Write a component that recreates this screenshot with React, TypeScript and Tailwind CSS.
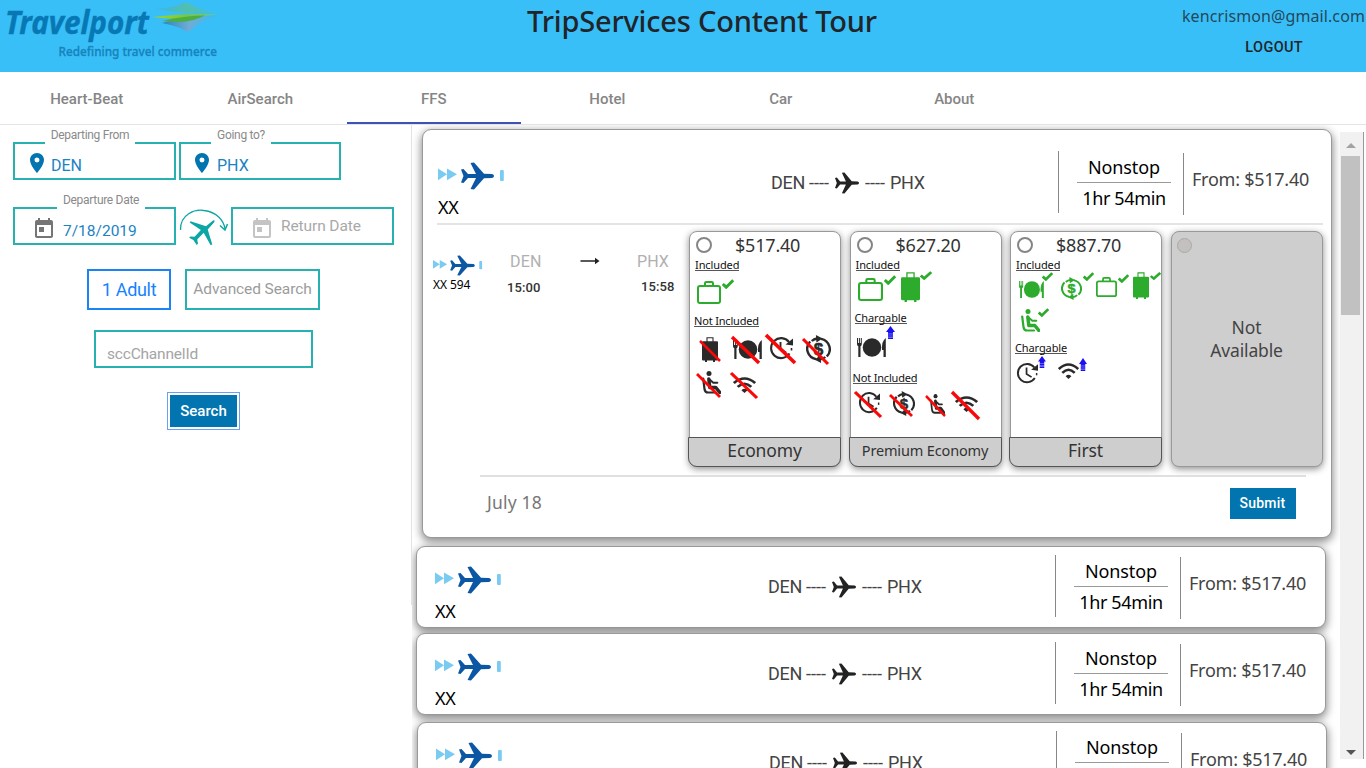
import React from "react";

type Kind = "case" | "luggage" | "meal" | "clock" | "refund" | "seat" | "wifi";
type Badge = "check" | "up" | "slash";

const glyphBox: Record<Kind, string> = {
  case: "0 0 24 23",
  luggage: "0 0 16 26",
  meal: "0 0 29 19",
  clock: "0 0 24 24",
  refund: "0 0 24 28",
  seat: "0 0 19 23",
  wifi: "0 0 22 17",
};

function Glyph({ kind }: { kind: Kind }) {
  switch (kind) {
    case "case":
      return (
        <g fill="none" stroke="currentColor" strokeWidth="2">
          <rect x="1" y="5" width="22" height="17" rx="2" />
          <path d="M8 5V2.2Q8 1 9.2 1h5.6Q16 1 16 2.2V5" />
        </g>
      );
    case "luggage":
      return (
        <g>
          <path d="M5 6V.8h6V6" fill="none" stroke="currentColor" strokeWidth="1.1" />
          <path d="M1 4.500h14q1 0 1 1v18q0 1-1 1H1q-1 0-1-1v-18q0-1 1-1z" fill="currentColor" />
          <path d="M3 24h2v2H3zM11 24h2v2h-2z" fill="currentColor" />
        </g>
      );
    case "meal":
      return (
        <g fill="currentColor">
          <circle cx="15" cy="9.5" r="9.300" />
          <path d="M0 0h1v5h.9V0h1v5h.9V0h1v6q0 1.7-1.3 2.2V19H1.300V8.200Q0 7.700 0 6z" />
          <path d="M28.800 0v19h-2.300v-7h-1.500q-.5-9 3.800-12z" />
        </g>
      );
    case "clock":
      return (
        <g fill="none" stroke="currentColor" strokeWidth="2.100">
          <path d="M20 6A10 10 0 1 0 20.500 17.500" />
          <path d="M11.500 6v7l5.500 3.500" strokeWidth="1.900" />
          <path d="M24 2.500v7l-7.500-1z" fill="currentColor" stroke="none" />
          <path d="M22.500 12v2.500" strokeWidth="1.600" />
        </g>
      );
    case "refund":
      return (
        <g>
          <g fill="none" stroke="currentColor" strokeWidth="2.300">
            <path d="M9.500 24.200A10.700 10.700 0 0 1 4 6.500" />
            <path d="M14.500 3.800A10.700 10.700 0 0 1 20 21.500" />
            <path d="M5.500 6Q8 3.800 11 3.500M18.500 22q-2.500 2.300-5.500 2.500" />
          </g>
          <path d="M9.500 0l6.500 3.500-6 4zM14.500 28L8 24.500l6-4z" fill="currentColor" />
          <text x="12" y="19.800" textAnchor="middle" fontFamily="Liberation Sans, sans-serif" fontWeight="700" fontSize="16.500" fill="currentColor" stroke="currentColor" strokeWidth=".5">$</text>
        </g>
      );
    case "seat":
      return (
        <g fill="none" stroke="currentColor" strokeLinecap="round">
          <circle cx="7" cy="2.500" r="2.500" fill="currentColor" stroke="none" />
          <path d="M1.200 7.500l1.300 10.500Q3 21.500 6 21.500h7" strokeWidth="2.200" />
          <path d="M6.800 8l1 8.500h6l4 5" strokeWidth="3.400" strokeLinejoin="round" />
          <path d="M7.500 8.500l3.800 3.300h4" strokeWidth="2" />
        </g>
      );
    case "wifi":
      return (
        <g fill="none" stroke="currentColor" strokeWidth="2.700">
          <path d="M.8 6.500Q11-3.300 21.200 6.500" />
          <path d="M4.500 10.500Q11 4 17.500 10.500" />
          <path d="M8 14Q11 11 14 14L11 17z" fill="currentColor" stroke="none" />
        </g>
      );
  }
}

function BadgeMark({ badge }: { badge: Badge }) {
  if (badge === "check")
    return (
      <svg viewBox="0 0 12 10" preserveAspectRatio="none" className="block h-full w-full text-[#2cab2c]">
        <path d="M.8 5l3.400 3.200L11.200 1.200" fill="none" stroke="currentColor" strokeWidth="3" />
      </svg>
    );
  if (badge === "up")
    return (
      <svg viewBox="0 0 9 13" preserveAspectRatio="none" className="block h-full w-full text-[#1a10f0]">
        <path d="M4.500 0L9 6H7v1.800H2V6H0zM2 8.300h5v1.400H2zM2 10.200h5v1.200H2zM2 12h5v1H2z" fill="currentColor" />
        <path d="M2 7.500h5V13H2z" fill="currentColor" opacity=".35" />
      </svg>
    );
  return (
    <svg viewBox="0 0 24 24" preserveAspectRatio="none" className="block h-full w-full overflow-visible text-[#fa0808]">
      <path d="M0 0L24 24" stroke="currentColor" strokeWidth="3" />
    </svg>
  );
}

interface FeatureData {
  kind: Kind;
  badge: Badge;
  box: string;
  mark: string;
}

function Feature({ kind, badge, box, mark }: FeatureData) {
  return (
    <div className={`relative shrink-0 ${badge === "check" ? "text-[#2cab2c]" : "text-[#2a2a2a]"} ${box}`}>
      <svg viewBox={glyphBox[kind]} preserveAspectRatio="none" className="block h-full w-full">
        <Glyph kind={kind} />
      </svg>
      <div className={`absolute ${mark}`}>
        <BadgeMark badge={badge} />
      </div>
    </div>
  );
}

interface Section {
  title: string;
  head: string;
  rows: { cls: string; items: FeatureData[] }[];
}

interface Fare {
  price: string;
  cabin: string;
  cabinCls: string;
  sections: Section[];
}

const fares: Fare[] = [
  {
    price: "$517.40",
    cabin: "Economy",
    cabinCls: "text-[17.500px] tracking-[-0.15px]",
    sections: [
      {
        title: "Included",
        head: "ml-[5px] tracking-[-0.1px]",
        rows: [
          {
            cls: "h-[43px]",
            items: [{ kind: "case", badge: "check", box: "ml-[7px] mt-[10px] w-[24px] h-[23px]", mark: "left-[25px] -top-[2px] w-[12px] h-[10px]" }],
          },
        ],
      },
      {
        title: "Not Included",
        head: "ml-[4px] tracking-[-0.18px]",
        rows: [
          {
            cls: "h-[43px]",
            items: [
              { kind: "luggage", badge: "slash", box: "ml-[12px] mt-[10px] w-[16px] h-[25px]", mark: "-left-[2px] top-[4px] w-[20px] h-[20px]" },
              { kind: "meal", badge: "slash", box: "ml-[15px] mt-[13px] w-[29px] h-[19px]", mark: "-left-[1px] -top-[3px] w-[27px] h-[26px]" },
              { kind: "clock", badge: "slash", box: "ml-[7px] mt-[9px] w-[24px] h-[24px]", mark: "-left-[3px] -top-[1px] w-[29px] h-[28px]" },
              { kind: "refund", badge: "slash", box: "ml-[13px] mt-[8px] w-[25px] h-[28px]", mark: "-left-[3px] top-[4px] w-[25px] h-[25px]" },
            ],
          },
          {
            cls: "h-[30px]",
            items: [
              { kind: "seat", badge: "slash", box: "ml-[12px] mt-px w-[19px] h-[23px]", mark: "-left-[5px] top-[3px] w-[23px] h-[23px]" },
              { kind: "wifi", badge: "slash", box: "ml-[12px] mt-[7px] w-[23px] h-[16px]", mark: "-left-[2px] -top-[4px] w-[26px] h-[25px]" },
            ],
          },
        ],
      },
    ],
  },
  {
    price: "$627.20",
    cabin: "Premium Economy",
    cabinCls: "text-[14.500px] tracking-[-0.15px]",
    sections: [
      {
        title: "Included",
        head: "ml-[5px] tracking-[-0.1px]",
        rows: [
          {
            cls: "h-[40px]",
            items: [
              { kind: "case", badge: "check", box: "ml-[7px] mt-[7px] w-[25px] h-[23px]", mark: "left-[26px] -top-[3px] w-[12px] h-[10px]" },
              { kind: "luggage", badge: "check", box: "ml-[18px] mt-[1px] w-[19px] h-[30px]", mark: "left-[19px] -top-[1px] w-[12px] h-[9px]" },
            ],
          },
        ],
      },
      {
        title: "Chargable",
        head: "ml-[4px] tracking-[-0.1px]",
        rows: [
          {
            cls: "h-[47px]",
            items: [{ kind: "meal", badge: "up", box: "ml-[6px] mt-[14px] w-[29px] h-[19px]", mark: "left-[29px] -top-[12px] w-[9px] h-[13px]" }],
          },
        ],
      },
      {
        title: "Not Included",
        head: "ml-[2px] tracking-[-0.18px]",
        rows: [
          {
            cls: "h-[30px]",
            items: [
              { kind: "clock", badge: "slash", box: "ml-[7px] mt-[7px] w-[22px] h-[23px]", mark: "-left-[3px] top-[1px] w-[26px] h-[25px]" },
              { kind: "refund", badge: "slash", box: "ml-[13px] mt-[7px] w-[22px] h-[25px]", mark: "-left-[3px] top-[4px] w-[22px] h-[21px]" },
              { kind: "seat", badge: "slash", box: "ml-[15px] mt-[10px] w-[15px] h-[20px]", mark: "-left-[4px] top-[2px] w-[19px] h-[20px]" },
              { kind: "wifi", badge: "slash", box: "ml-[10px] mt-[12px] w-[23px] h-[16px]", mark: "-left-[3px] -top-[4px] w-[27px] h-[27px]" },
            ],
          },
        ],
      },
    ],
  },
  {
    price: "$887.70",
    cabin: "First",
    cabinCls: "text-[17.500px] tracking-[-0.15px]",
    sections: [
      {
        title: "Included",
        head: "ml-[5px] tracking-[-0.1px]",
        rows: [
          {
            cls: "h-[38px]",
            items: [
              { kind: "meal", badge: "check", box: "ml-[8px] mt-[10px] w-[25px] h-[17px]", mark: "left-[23px] -top-[9px] w-[11px] h-[9px]" },
              { kind: "refund", badge: "check", box: "ml-[17px] mt-[6px] w-[21px] h-[23px]", mark: "left-[22px] -top-[5px] w-[11px] h-[9px]" },
              { kind: "case", badge: "check", box: "ml-[14px] mt-[6px] w-[21px] h-[20px]", mark: "left-[22px] -top-[3px] w-[11px] h-[9px]" },
              { kind: "luggage", badge: "check", box: "ml-[16px] mt-px w-[16px] h-[27px]", mark: "left-[17px] top-0 w-[11px] h-[8px]" },
            ],
          },
          {
            cls: "h-[32px]",
            items: [{ kind: "seat", badge: "check", box: "ml-[10px] w-[19px] h-[23px]", mark: "left-[17px] -top-[1px] w-[11px] h-[9px]" }],
          },
        ],
      },
      {
        title: "Chargable",
        head: "ml-[4px] tracking-[-0.1px]",
        rows: [
          {
            cls: "h-[30px]",
            items: [
              { kind: "clock", badge: "up", box: "ml-[5px] mt-[8px] w-[22px] h-[22px]", mark: "left-[22px] -top-[6px] w-[8px] h-[12px]" },
              { kind: "wifi", badge: "up", box: "ml-[20px] mt-[9px] w-[21px] h-[16px]", mark: "left-[21px] -top-[5px] w-[8px] h-[13px]" },
            ],
          },
        ],
      },
    ],
  },
];

const humanist = "font-['Noto_Sans','Open_Sans',sans-serif]";

function FareCard({ fare }: { fare: Fare }) {
  return (
    <div className="flex h-[236px] w-[152px] shrink-0 flex-col rounded-[8px] border border-[#999] bg-white shadow-[0_2px_7px_rgba(0,0,0,0.45)]">
      <div className="flex h-[26px] shrink-0 items-center pl-[6px]">
        <span className="h-[16px] w-[16px] rounded-full border-2 border-[#858585]" />
        <span className="ml-[23px] text-[18px] leading-[26px] tracking-[-0.2px] text-[#333]">{fare.price}</span>
      </div>
      {fare.sections.map((s) => (
        <React.Fragment key={s.title}>
          <div className={`h-[13px] shrink-0 self-start border-b border-[#555] text-[11px] leading-[13px] text-[#111] ${s.head}`}>{s.title}</div>
          {s.rows.map((r, i) => (
            <div key={i} className={`flex shrink-0 items-start ${r.cls}`}>
              {r.items.map((f) => (
                <Feature key={f.kind} {...f} />
              ))}
            </div>
          ))}
        </React.Fragment>
      ))}
      <div className={`-ml-[2px] -mr-px -mb-px mt-auto h-[30px] shrink-0 rounded-b-[9px] border border-[#555] bg-[#cecece] text-center leading-[25px] text-[#333] ${fare.cabinCls}`}>{fare.cabin}</div>
    </div>
  );
}

const planePath =
  "M0 7.500L2.500 7 7 12h8L9.500 1 13 .5l10 11.300 8 .2q2 .5 2 2t-2 2l-8 .2-10 11.300L9.500 27 15 16H7l-4.500 5L0 20.500 2.500 14z";

function AirlineLogo({ className }: { className: string }) {
  return (
    <svg viewBox="0 0 67 28" className={`block shrink-0 ${className}`}>
      <path d="M0 6.500l9 5.800-9 6zM9 6.500l10 5.800-10 6z" fill="#7acbf1" />
      <rect x="62" y="8" width="3.800" height="11" rx="1" fill="#7acbf1" />
      <path transform="translate(23 0)" d={planePath} fill="#0c57a3" />
    </svg>
  );
}

function Summary({ className }: { className: string }) {
  return (
    <div className={`flex h-[79px] shrink-0 items-start ${className}`}>
      <div className="w-[333px] shrink-0 pt-[19px]">
        <AirlineLogo className="h-[28px] w-[67px]" />
        <div className="mt-[5px] text-[18px] leading-[24px] tracking-[-0.2px] text-black">XX</div>
      </div>
      <div className="flex w-[287px] shrink-0 items-center pt-[27px] font-['Roboto',sans-serif] text-[18px] leading-[26px] tracking-[-0.3px] text-[#444]">
        <span className="w-[38px]">DEN</span>
        <span className="w-[26px] tracking-[0px]">----</span>
        <svg viewBox="0 0 33 28" preserveAspectRatio="none" className="h-[22px] w-[24px]">
          <path d={planePath} fill="#222" />
        </svg>
        <span className="ml-[6px] w-[25px] tracking-[0px]">----</span>
        <span>PHX</span>
      </div>
      <div className="mt-[8px] h-[62px] w-px bg-[#888]" />
      <div className="flex w-[124px] shrink-0 flex-col items-center pl-[6px] pt-[11px] text-[18px] tracking-[-0.1px] text-black">
        <span className="leading-[26px]">Nonstop</span>
        <span className="mt-[2px] h-px w-[94px] bg-[#999]" />
        <span className="mt-[2px] leading-[27px] tracking-[-0.35px]">1hr 54min</span>
      </div>
      <div className="mt-[10px] h-[62px] w-px bg-[#888]" />
      <span className="ml-[8px] mt-[23px] whitespace-nowrap text-[18px] leading-[26px] tracking-[-0.25px] text-[#444]">From: $517.40</span>
    </div>
  );
}

const cardBase = "shrink-0 rounded-[9px] border border-[#999] bg-white shadow-[0_3px_8px_1px_rgba(0,0,0,0.45)]";

function OpenItinerary() {
  return (
    <div className={`ml-[10px] flex h-[409px] w-[910px] flex-col pt-[13px] ${cardBase}`}>
      <Summary className="pl-[15px]" />
      <div className="ml-[14px] mr-[8px] mt-px h-[2px] shrink-0 bg-[#e4e4e4]" />
      <div className="flex shrink-0 pl-[10px] pt-[6px]">
        <div className="w-[74px] shrink-0 pt-[24px]">
          <AirlineLogo className="h-[21px] w-[50px]" />
          <div className="mt-[2px] text-[12px] leading-[14px] tracking-[-0.1px] text-black">XX 594</div>
        </div>
        <div className="flex h-[80px] w-[182px] shrink-0 items-start pt-[19px] font-['Roboto',sans-serif]">
          <div className="w-[73px]">
            <div className="ml-[3px] text-[16px] leading-[23px] tracking-[0.2px] text-[#b0b0b0]">DEN</div>
            <div className="mt-[5px] text-[13px] font-medium leading-[20px] tracking-[0.1px] text-[#333]">15:00</div>
          </div>
          <svg viewBox="0 0 19 8" className="mt-[7px] h-[8px] w-[20px]">
            <path d="M0 4h16" stroke="#222" strokeWidth="1.500" />
            <path d="M14.500.8L19 4l-4.500 3.200z" fill="#222" />
          </svg>
          <div className="ml-[37px] w-[40px]">
            <div className="text-[16px] leading-[23px] tracking-[0.1px] text-[#b0b0b0]">PHX</div>
            <div className="ml-[4px] mt-[4px] text-[13px] font-medium leading-[20px] tracking-[0.1px] text-[#333]">15:58</div>
          </div>
        </div>
        <div className="flex shrink-0 gap-[8.500px]">
          {fares.map((f) => (
            <FareCard key={f.cabin} fare={f} />
          ))}
          <div className="flex h-[236px] w-[152px] shrink-0 flex-col rounded-[8px] border border-[#999] bg-[#cecece] shadow-[0_2px_7px_rgba(0,0,0,0.45)]">
            <span className="ml-[5px] mt-[6px] h-[15px] w-[15px] rounded-full border border-[#aaa] bg-[#c5c0c0]" />
            <div className="mt-[63px] text-center text-[17.500px] leading-[23px] tracking-[-0.15px] text-[#444]">
              Not
              <br />
              Available
            </div>
          </div>
        </div>
      </div>
      <div className="ml-[57px] mr-[25px] mt-[8px] h-[2px] shrink-0 bg-[#e0e0e0]" />
      <div className="flex items-start justify-between pl-[64px] pr-[35px] pt-[11px]">
        <span className="pt-[1px] text-[17.500px] leading-[26px] tracking-[0.2px] text-[#777]">July 18</span>
        <button className="h-[31px] w-[66px] bg-[#0275b1] pr-px font-['Roboto',sans-serif] text-[14px] font-medium tracking-[0.200px] text-white">Submit</button>
      </div>
    </div>
  );
}

function Field({ box, label, labelCls, children }: { box: string; label?: string; labelCls?: string; children: React.ReactNode }) {
  return (
    <div className={`relative flex h-[38px] shrink-0 items-center border-2 border-[#28b1b1] ${box}`}>
      {label && <span className={`absolute -top-[16px] h-[17px] whitespace-nowrap bg-white text-center text-[12px] leading-[15px] tracking-[-0.3px] text-[#8a8a8a] ${labelCls}`}>{label}</span>}
      {children}
    </div>
  );
}

function Pin() {
  return (
    <svg viewBox="5 2 14 20" className="mt-[3px] h-[20px] w-[14px]">
      <path d="M12 2C8.130 2 5 5.130 5 9c0 5.250 7 13 7 13s7-7.750 7-13c0-3.870-3.130-7-7-7zm0 9.500a2.500 2.500 0 0 1 0-5 2.500 2.500 0 0 1 0 5z" fill="#0275b1" />
    </svg>
  );
}

function Calendar({ className }: { className: string }) {
  return (
    <svg viewBox="3 1 18 20" className={`h-[20px] w-[18px] ${className}`}>
      <path d="M19 3h-1V1h-2v2H8V1H6v2H5c-1.110 0-1.990.9-1.990 2L3 19c0 1.100.890 2 2 2h14c1.100 0 2-.9 2-2V5c0-1.100-.9-2-2-2zm0 16H5V8h14v11zM7 10h5v5H7z" fill="currentColor" />
    </svg>
  );
}

function RoundTrip() {
  return (
    <svg viewBox="0 0 50 40" className="h-[40px] w-[50px] shrink-0 overflow-visible text-[#0ea5a5]">
      <path d="M1.500 23C1 7 16 2 25 3.500C38 5 45 14 46 22" fill="none" stroke="currentColor" strokeWidth="1.300" />
      <path d="M41 18.500l5 4.500 2.500-6" fill="none" stroke="currentColor" strokeWidth="1.500" />
      <path d="M34 13.500q2.500-.8 1.200 1.800l-6.500 7.200 4.600 15-1.800.4-6.800-12.200-6.500 6.700.8 4.300-1.300 1.200-3.300-4.800-4.300-2.300 1.300-1.400 4.200.3 6.300-6.700-11.200-7.600.8-1.200 15.500 5.100z" fill="currentColor" />
    </svg>
  );
}

function Brand() {
  return (
    <svg viewBox="0 0 230 72" className="h-[72px] w-[230px] shrink-0">
      <defs>
        <linearGradient id="top" x1="0" x2="1"><stop offset="0" stopColor="#38b8e4" /><stop offset=".5" stopColor="#52bfae" /><stop offset="1" stopColor="#3abef2" /></linearGradient>
        <linearGradient id="mid" x1="0" x2="1"><stop offset="0" stopColor="#a3d61e" /><stop offset=".5" stopColor="#78c83c" /><stop offset="1" stopColor="#5fc9b0" /></linearGradient>
        <linearGradient id="low" x1="0" x2="1"><stop offset="0" stopColor="#2b86bd" /><stop offset=".5" stopColor="#70acd6" /><stop offset="1" stopColor="#3abaf0" /></linearGradient>
      </defs>
      <path d="M155 9Q172 8 186 2.500Q200 10 221 14Q190 15 155 9z" fill="url(#top)" />
      <path d="M162 23Q185 15 217 15.500Q198 22 188 32Q178 26 162 23z" fill="url(#low)" />
      <path d="M153 17Q185 13 219 14.500Q200 16 184 19Q172 19 153 17z" fill="url(#mid)" />
      <path d="M162 21Q185 15.500 205 15.500Q192 22 180 22z" fill="#4caf3f" />
      <text x="5" y="34" textLength="144" lengthAdjust="spacingAndGlyphs" fontFamily="Noto Sans, sans-serif" fontWeight="700" fontStyle="italic" fontSize="32" fill="#0878b5" stroke="#0878b5" strokeWidth=".4">Travelport</text>
      <text x="58.500" y="56" textLength="158.500" lengthAdjust="spacingAndGlyphs" fontFamily="Noto Sans, sans-serif" fontWeight="500" fontSize="12.500" fill="#1683bd" stroke="#1683bd" strokeWidth=".3">Redefining travel commerce</text>
    </svg>
  );
}

const tabs = ["Heart-Beat", "AirSearch", "FFS", "Hotel", "Car", "About"];

export default function App() {
  return (
    <div className="flex h-[768px] w-[1366px] flex-col overflow-hidden bg-white font-['Roboto',sans-serif]">
      <header className="flex h-[72px] shrink-0 justify-between bg-[#39bff7]">
        <Brand />
        <h1 className={`w-[440px] whitespace-nowrap pt-[2px] pl-[4px] text-center text-[29px] font-medium leading-[38px] tracking-[-0.2px] text-[#212529] ${humanist}`}>TripServices Content Tour</h1>
        <div className="flex w-[196px] flex-col items-end pr-px text-[#212529]">
          <span className={`whitespace-nowrap pt-[4px] text-[16px] leading-[24px] tracking-[0.1px] text-[#24485c] ${humanist}`}>kencrismon@gmail.com</span>
          <span className="mr-[62px] mt-[9px] text-[14.500px] font-medium leading-[21px] tracking-[0.35px]">LOGOUT</span>
        </div>
      </header>
      <nav className="flex h-[53px] shrink-0 border-b border-[#e4e4e4]">
        {tabs.map((t) => (
          <div key={t} className={`flex w-[173.500px] items-center justify-center border-b-2 pt-[4px] text-[15px] font-medium text-[#858585] ${t === "FFS" ? "border-[#3f51b5]" : "border-transparent"}`}>
            {t}
          </div>
        ))}
      </nav>
      <main className="flex min-h-0 flex-1">
        <aside className="flex h-[480px] w-[412px] shrink-0 flex-col border-r border-[#e2e2e2]">
          <div className="flex gap-[3px] pl-[13px] pt-[17px]">
            <Field box="w-[163px]" label="Departing From" labelCls="left-[30px] w-[90px]">
              <span className="ml-[15px]"><Pin /></span>
              <span className="ml-[7px] pt-[10px] text-[16px] text-[#1b83c2]">DEN</span>
            </Field>
            <Field box="w-[162px]" label="Going to?" labelCls="left-[30px] w-[60px]">
              <span className="ml-[14px]"><Pin /></span>
              <span className="ml-[8px] pt-[10px] text-[16px] text-[#1b83c2]">PHX</span>
            </Field>
          </div>
          <div className="flex h-[65px] pl-[13px] pt-[27px]">
            <Field box="w-[163px]" label="Departure Date" labelCls="left-[42px] w-[88px]">
              <Calendar className="ml-[20px] mt-[3px] text-[#757575]" />
              <span className="ml-[10px] pt-[11px] text-[15.500px] text-[#1b83c2]">7/18/2019</span>
            </Field>
            <span className="ml-[3px]"><RoundTrip /></span>
            <Field box="ml-[2px] w-[163px]">
              <Calendar className="ml-[20px] mt-[3px] text-[#c4c4c4]" />
              <span className="ml-[10px] pt-[2px] text-[15.500px] tracking-[-0.1px] text-[#a9a9a9]">Return Date</span>
            </Field>
          </div>
          <div className="flex items-start gap-[14px] pl-[87px] pt-[23px]">
            <div className="mt-px h-[41px] w-[84px] border-2 border-[#1a84f5] text-center text-[18px] leading-[38px] tracking-[-0.3px] text-[#1682ff]">1 Adult</div>
            <div className="mt-px h-[41px] w-[135px] border-2 border-[#28b1b1] text-center text-[15.500px] leading-[37px] tracking-[-0.1px] text-[#9c9c9c]">Advanced Search</div>
          </div>
          <div className="ml-[94px] mt-[20px] h-[38px] w-[219px] shrink-0 border-2 border-[#28b1b1] pl-[11px] text-[15.500px] leading-[44px] tracking-[-0.2px] text-[#a5a5a5]">sccChannelId</div>
          <div className="ml-[167px] mt-[24px] h-[38px] w-[73px] shrink-0 border border-[#6a9ff5] p-[2px]">
            <button className="h-full w-full bg-[#0275b1] text-[15px] font-medium text-white">Search</button>
          </div>
        </aside>
        <section className={`flex min-w-0 flex-1 flex-col overflow-hidden pt-[4px] ${humanist}`}>
          <OpenItinerary />
          <div className={`ml-[4px] mt-[8px] h-[82px] w-[910px] ${cardBase}`}>
            <Summary className="pl-[18px]" />
          </div>
          <div className={`ml-[4px] mt-[5px] h-[82px] w-[910px] ${cardBase}`}>
            <Summary className="pl-[18px]" />
          </div>
          <div className={`ml-[5px] mt-[7px] h-[82px] w-[910px] ${cardBase}`}>
            <Summary className="pl-[18px]" />
          </div>
        </section>
        <div className="mr-[2px] mt-[7px] flex h-[627px] w-[24px] shrink-0 flex-col items-center border-r border-[#999] bg-[#f1f1f1]">
          <svg viewBox="0 0 10 5" className="mt-[11px] h-[5px] w-[10px] -translate-x-px"><path d="M5 0l5 5H0z" fill="#a3a3a3" /></svg>
          <div className="mt-[8px] h-[159px] w-[19px] -translate-x-px bg-[#c1c1c1]" />
          <svg viewBox="0 0 10 5" className="mb-[4px] mt-auto h-[5px] w-[10px] -translate-x-px"><path d="M5 5l5-5H0z" fill="#555" /></svg>
        </div>
      </main>
    </div>
  );
}
